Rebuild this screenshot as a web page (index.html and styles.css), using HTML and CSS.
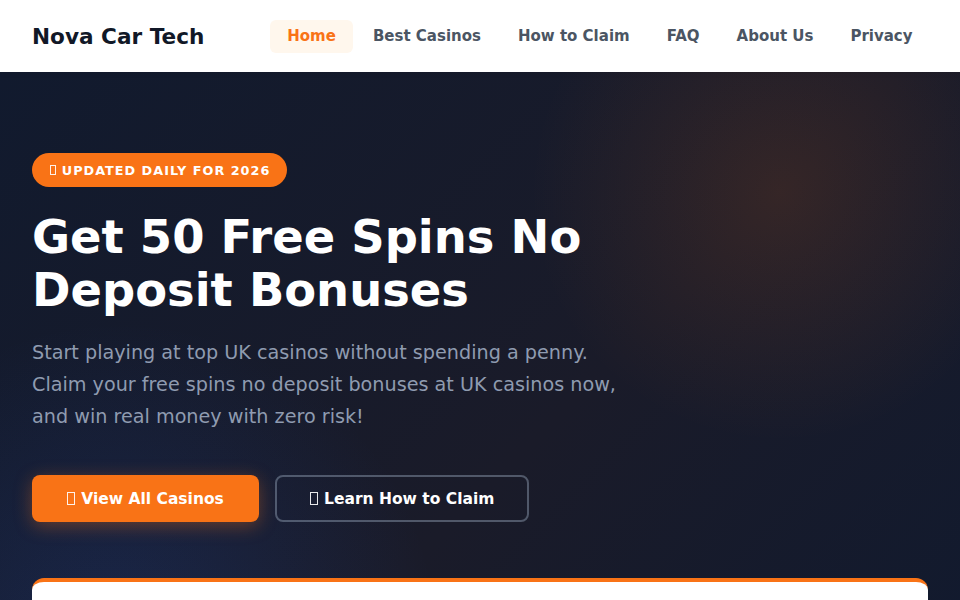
FILE: index.html
```html
<!DOCTYPE html>
<html lang="en">
<head>
  <meta charset="UTF-8">
  <meta name="viewport" content="width=device-width, initial-scale=1.0">
  <title>Nova Car Tech - Free Spins No Deposit</title>
  <link rel="stylesheet" href="styles.css">
</head>
<body>
  <!-- Header -->
  <header class="site-header">
    <div class="logo">Nova Car Tech</div>
    <nav class="nav">
      <a href="#" class="nav-link active">Home</a>
      <a href="#" class="nav-link">Best Casinos</a>
      <a href="#" class="nav-link">How to Claim</a>
      <a href="#" class="nav-link">FAQ</a>
      <a href="#" class="nav-link">About Us</a>
      <a href="#" class="nav-link">Privacy</a>
    </nav>
  </header>

  <!-- Hero -->
  <section class="hero">
    <div class="hero-inner">
      <span class="badge"><i class="icon"></i>Updated Daily for 2026</span>
      <h1 class="hero-title">Get 50 Free Spins No Deposit Bonuses</h1>
      <p class="hero-text">Start playing at top UK casinos without spending a penny. Claim your free spins no deposit bonuses at UK casinos now, and win real money with zero risk!</p>
      <div class="hero-actions">
        <a href="#" class="btn btn-primary"><i class="icon"></i>View All Casinos</a>
        <a href="#" class="btn btn-outline"><i class="icon"></i>Learn How to Claim</a>
      </div>
    </div>

    <div class="card"></div>
  </section>
</body>
</html>
```

FILE: styles.css
```css
/* General Reset */
* {
  margin: 0;
  padding: 0;
  box-sizing: border-box;
}

body {
  font-family: 'DejaVu Sans', sans-serif;
  background-color: #0f172a;
  color: #111827;
  overflow: hidden;
}

a {
  text-decoration: none;
}

/* Icon placeholder (icon font not loaded) */
.icon {
  display: inline-block;
  width: 0.5em;
  height: 0.82em;
  border: 1px solid currentColor;
  margin-right: 0.42em;
  vertical-align: -0.14em;
  opacity: 0.9;
}

/* Header */
.site-header {
  height: 72px;
  background-color: #fff;
  display: flex;
  align-items: center;
  justify-content: space-between;
  padding: 0 30px 0 32px;
  box-shadow: 0 1px 6px rgba(0, 0, 0, 0.08);
  position: relative;
  z-index: 2;
}

.logo {
  font-size: 21.6px;
  font-weight: 700;
  color: #111827;
}

.nav {
  display: flex;
  gap: 2px;
}

.nav-link {
  font-size: 15px;
  line-height: 17px;
  font-weight: 700;
  color: #4b5563;
  padding: 8px 17.5px;
  border-radius: 6px;
}

.nav-link.active {
  color: #f97316;
  background-color: #fff7ed;
}

/* Hero */
.hero {
  min-height: 528px;
  padding: 81px 32px 0;
  background:
    radial-gradient(circle at 780px 120px, rgba(249, 115, 22, 0.12) 0, rgba(249, 115, 22, 0) 250px),
    radial-gradient(circle at 120px 570px, rgba(37, 99, 235, 0.16) 0, rgba(37, 99, 235, 0) 320px),
    linear-gradient(135deg, #111a2e 0%, #1a1b29 60%, #121a2e 100%);
}

.hero-inner {
  max-width: 620px;
}

.badge {
  display: inline-flex;
  align-items: center;
  height: 34px;
  padding: 0 17px 0 18px;
  border-radius: 999px;
  background-color: #f97316;
  color: #fff;
  font-size: 12.8px;
  font-weight: 700;
  letter-spacing: 1px;
  text-transform: uppercase;
}

.badge .icon {
  vertical-align: 0;
  height: 0.75em;
}

.hero-title {
  margin-top: 24px;
  font-size: 46.4px;
  line-height: 53px;
  font-weight: 700;
  color: #fff;
}

.hero-text {
  max-width: 600px;
  margin-top: 20px;
  font-size: 19.2px;
  line-height: 32px;
  color: #8f9bb0;
}

.hero-actions {
  display: flex;
  gap: 16px;
  margin-top: 42px;
}

.btn {
  display: inline-flex;
  align-items: center;
  justify-content: center;
  height: 47px;
  padding: 0 33px;
  border: 2px solid transparent;
  border-radius: 8px;
  font-size: 15.5px;
  font-weight: 700;
  color: #fff;
}

.btn-primary {
  background-color: #f97316;
  box-shadow: 0 4px 18px rgba(249, 115, 22, 0.35);
}

.btn-outline {
  border-color: rgba(148, 163, 184, 0.45);
}

/* Card below hero */
.card {
  margin-top: 56px;
  height: 40px;
  background-color: #fff;
  border-top: 4px solid #f97316;
  border-radius: 12px 12px 0 0;
}
```
